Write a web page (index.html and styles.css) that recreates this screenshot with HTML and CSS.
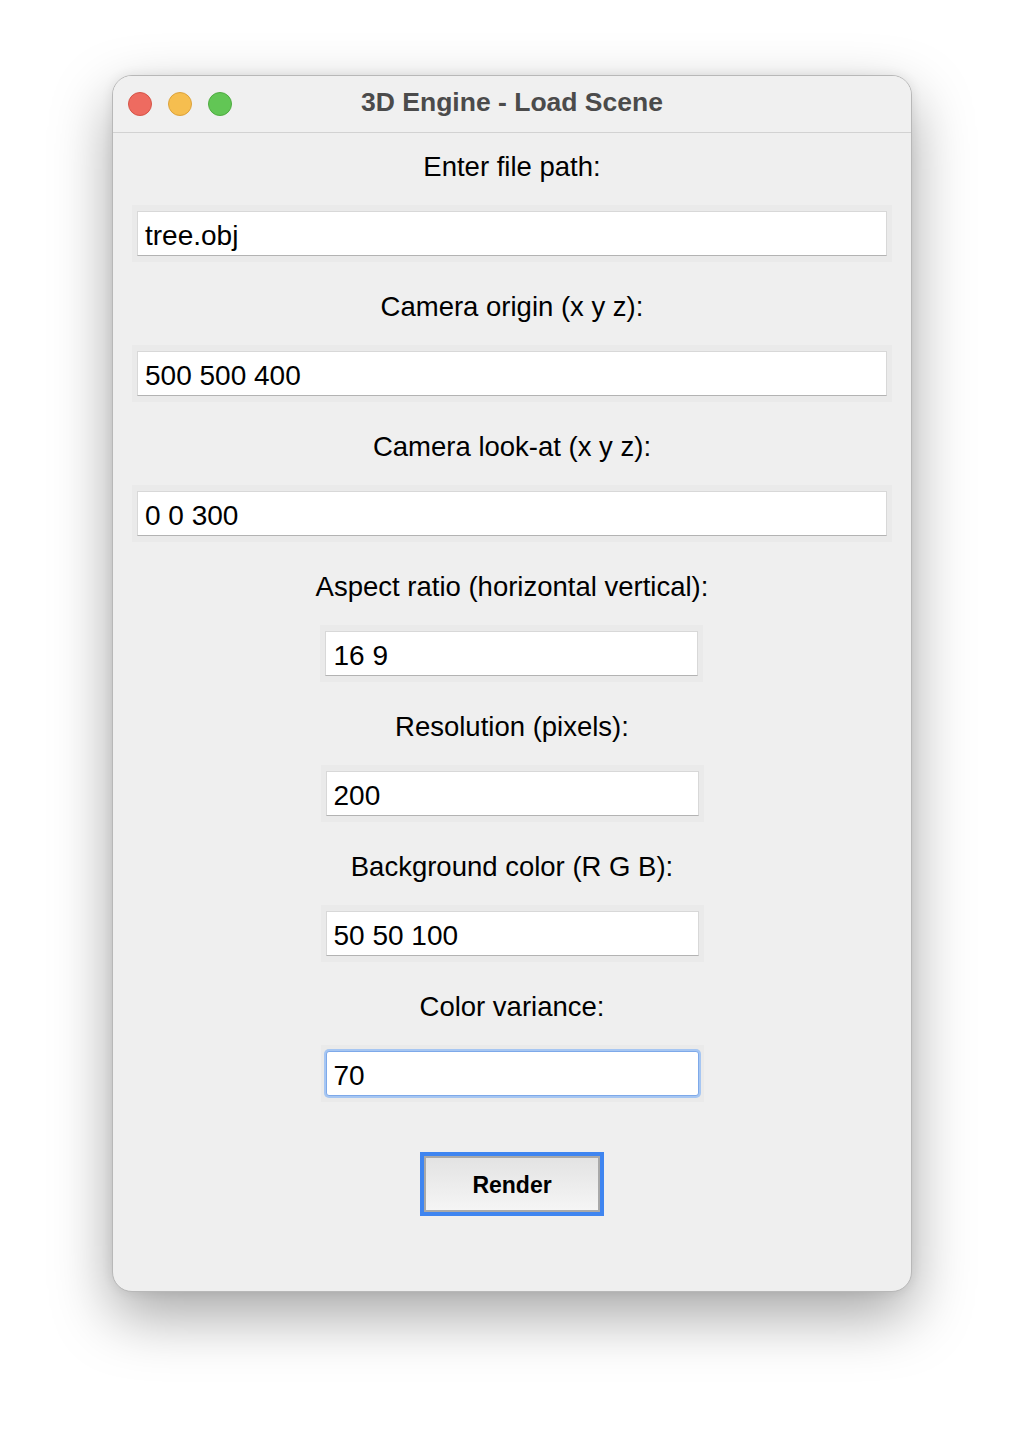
FILE: index.html
```html
<!DOCTYPE html>
<html>
<head>
<meta charset="utf-8">
<link rel="stylesheet" href="styles.css">
</head>
<body>
<div class="window">
  <div class="titlebar">
    <div class="lights">
      <span class="light red"></span>
      <span class="light yellow"></span>
      <span class="light green"></span>
    </div>
    <div class="title">3D Engine - Load Scene</div>
    <div></div>
  </div>
  <div class="content">
    <div class="row">
      <div class="label">Enter file path:</div>
      <div class="frame wide"><div class="field">tree.obj</div></div>
    </div>
    <div class="row">
      <div class="label">Camera origin (x y z):</div>
      <div class="frame wide"><div class="field">500 500 400</div></div>
    </div>
    <div class="row">
      <div class="label">Camera look-at (x y z):</div>
      <div class="frame wide"><div class="field">0 0 300</div></div>
    </div>
    <div class="row">
      <div class="label">Aspect ratio (horizontal vertical):</div>
      <div class="frame narrow"><div class="field">16 9</div></div>
    </div>
    <div class="row">
      <div class="label">Resolution (pixels):</div>
      <div class="frame narrow"><div class="field">200</div></div>
    </div>
    <div class="row">
      <div class="label">Background color (R G B):</div>
      <div class="frame narrow"><div class="field">50 50 100</div></div>
    </div>
    <div class="row last">
      <div class="label">Color variance:</div>
      <div class="frame narrow focus"><div class="field">70</div></div>
    </div>
    <div class="button-ring"><div class="button">Render</div></div>
  </div>
</div>
</body>
</html>
```

FILE: styles.css
```css
html, body {
  margin: 0;
  padding: 0;
  background: #ffffff;
}
body {
  font-family: "Liberation Sans", Arial, sans-serif;
  height: 1440px;
  overflow: hidden;
}
.window {
  box-sizing: border-box;
  width: 800px;
  height: 1217px;
  margin: 75px auto 0;
  background: #efefef;
  border: 1px solid #b8b8b8;
  border-radius: 20px;
  box-shadow: 0 24px 60px rgba(0, 0, 0, 0.35), 0 0 12px rgba(0, 0, 0, 0.08);
  overflow: hidden;
}
.titlebar {
  height: 56px;
  border-bottom: 1px solid #d2d2d2;
  background: #f0f0f0;
  display: grid;
  grid-template-columns: 1fr auto 1fr;
  align-items: center;
}
.lights {
  display: flex;
  gap: 16px;
  padding-left: 15px;
}
.light {
  box-sizing: border-box;
  width: 24px;
  height: 24px;
  border-radius: 50%;
}
.red { background: #ee6b60; border: 1px solid #d55447; }
.yellow { background: #f6be4f; border: 1px solid #dca23b; }
.green { background: #62c655; border: 1px solid #4fab41; }
.title {
  font-weight: bold;
  font-size: 26.5px;
  color: #4b4b4b;
  margin-top: -3px;
}
.content {
  display: flex;
  flex-direction: column;
  align-items: center;
  padding-top: 19px;
}
.row {
  display: flex;
  flex-direction: column;
  align-items: center;
  margin-bottom: 30px;
}
.row.last {
  margin-bottom: 50px;
}
.label {
  font-size: 27.5px;
  line-height: 30px;
  height: 30px;
  color: #000;
  margin-bottom: 23px;
}
.frame {
  background: #eaeaea;
  padding: 6px 5px;
}
.field {
  box-sizing: border-box;
  height: 45px;
  background: #ffffff;
  border: 1px solid #d8d8d8;
  border-bottom-color: #b3b3b3;
  font-size: 28px;
  line-height: 47px;
  padding-left: 7px;
  color: #000;
}
.wide .field { width: 750px; }
.narrow .field { width: 373px; }
.focus .field {
  border: 1px solid #7ea9e9;
  border-radius: 3px;
  box-shadow: 0 0 0 2px #a6c6f2;
}
.button-ring {
  box-sizing: border-box;
  width: 184px;
  height: 64px;
  border: 4px solid #3f85f0;
}
.button {
  box-sizing: border-box;
  height: 100%;
  border: 2px solid #a9a9a9;
  background: linear-gradient(#e3e3e3, #f5f5f5);
  display: flex;
  align-items: center;
  justify-content: center;
  font-weight: bold;
  font-size: 23px;
  color: #000;
  padding-top: 3px;
}
```
